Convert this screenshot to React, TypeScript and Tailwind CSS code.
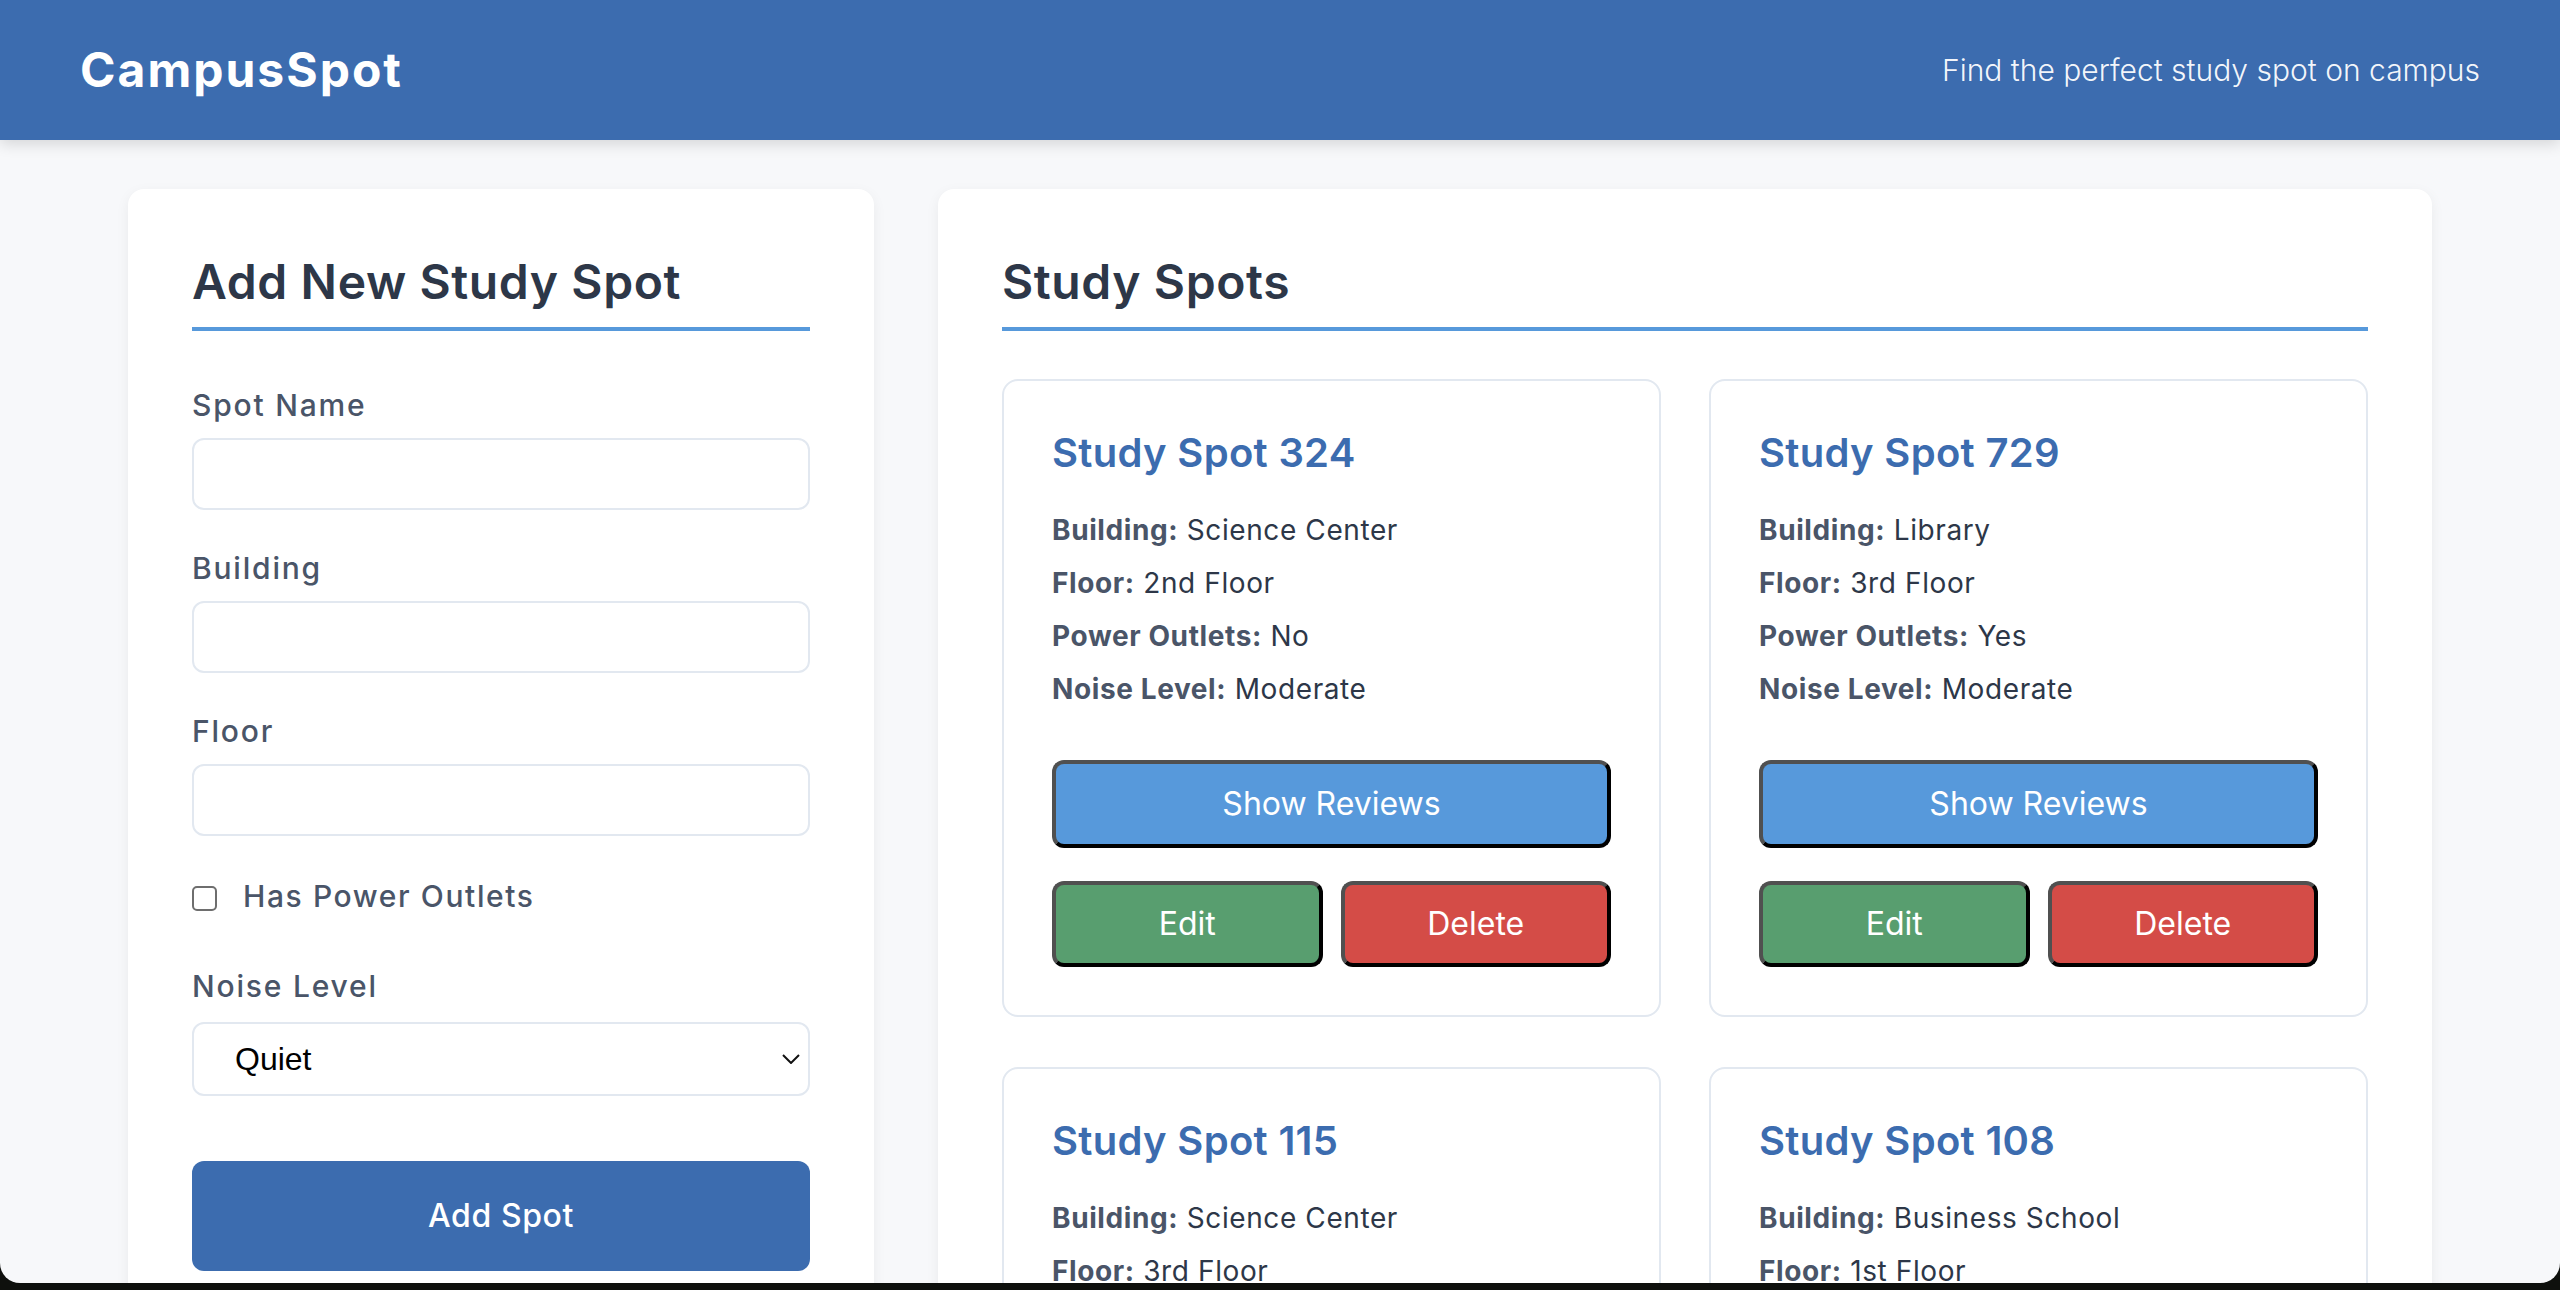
import React from 'react'

type Spot = {
    id: number
    building: string
    floor: string
    outlets: string
    noise: string
}

const spots: Spot[] = [
    { id: 324, building: 'Science Center', floor: '2nd Floor', outlets: 'No', noise: 'Moderate' },
    { id: 729, building: 'Library', floor: '3rd Floor', outlets: 'Yes', noise: 'Moderate' },
    { id: 115, building: 'Science Center', floor: '3rd Floor', outlets: 'Yes', noise: 'Quiet' },
    { id: 108, building: 'Business School', floor: '1st Floor', outlets: 'No', noise: 'Loud' },
]

const font = "font-['Inter','Open_Sans',sans-serif]"

const Field = ({ label, className }: { label: string; className?: string }) => (
    <div className={className}>
        <label className="block text-[30px] leading-[45px] font-medium tracking-[1.8px] text-[#4a5568]">
            {label}
        </label>
        <input
            type="text"
            className="mt-[10px] block w-full h-[72px] border-2 border-[#e2e8f0] rounded-[12px] bg-white px-[24px] outline-none"
        />
    </div>
)

const Detail = ({ label, value }: { label: string; value: string }) => (
    <p className="text-[28px] leading-[53px] tracking-[0.6px] text-[#2d3748]">
        <span className="font-bold text-[#4a5568]">{label}:</span> {value}
    </p>
)

const btnEdge = 'border-4 border-t-[#505050] border-l-[#505050] border-b-black border-r-black'

const SpotCard = ({ spot }: { spot: Spot }) => (
    <div className="border-2 border-[#e2e8f0] rounded-[16px] p-[48px] bg-white">
        <h3 className="text-[40px] leading-[48px] font-semibold tracking-[0.3px] text-[#3c6caf]">
            Study Spot {spot.id}
        </h3>
        <div className="mt-[27px]">
            <Detail label="Building" value={spot.building} />
            <Detail label="Floor" value={spot.floor} />
            <Detail label="Power Outlets" value={spot.outlets} />
            <Detail label="Noise Level" value={spot.noise} />
        </div>
        <button className={`mt-[44px] w-full h-[88px] rounded-[12px] ${btnEdge} bg-[#5799db] text-white text-[32px]`}>
            Show Reviews
        </button>
        <div className="mt-[33px] grid grid-cols-2 gap-[18px]">
            <button className={`h-[86px] rounded-[12px] ${btnEdge} bg-[#589e6f] text-white text-[32px]`}>
                Edit
            </button>
            <button className={`h-[86px] rounded-[12px] ${btnEdge} bg-[#d44c47] text-white text-[32px]`}>
                Delete
            </button>
        </div>
    </div>
)

export default function App() {
    return (
        <div className={`h-[1290px] w-[2560px] bg-[#0e100d] overflow-hidden ${font}`}>
            <div className="h-[1283px] overflow-hidden rounded-b-[20px] bg-[#f7f8fa] flex flex-col">
                {/* Header */}
                <header className="relative z-10 h-[140px] shrink-0 bg-[#3c6caf] px-[80px] flex items-center justify-between shadow-[0_4px_14px_rgba(0,0,0,0.14)]">
                    <h1 className="text-[48px] font-bold tracking-[2px] text-white">CampusSpot</h1>
                    <p className="text-[30px] font-light text-white/95">
                        Find the perfect study spot on campus
                    </p>
                </header>

                <main className="mx-auto w-[2304px] pt-[49px] grid grid-cols-[746px_1fr] gap-[64px] items-start">
                    {/* Add form */}
                    <section className="bg-white rounded-[16px] p-[64px] shadow-[0_4px_14px_rgba(0,0,0,0.06)]">
                        <h2 className="text-[48px] leading-[57.6px] font-semibold tracking-[0.6px] text-[#2d3748] pb-[16px] border-b-4 border-[#5799db]">
                            Add New Study Spot
                        </h2>
                        <form className="mt-[52px]">
                            <Field label="Spot Name" />
                            <Field label="Building" className="mt-[36px]" />
                            <Field label="Floor" className="mt-[36px]" />

                            <div className="mt-[38px] flex items-center gap-[26px]">
                                <input
                                    type="checkbox"
                                    className="appearance-none w-[25px] h-[25px] border-2 border-[#6e6e6e] rounded-[5px] bg-white mt-[4px]"
                                />
                                <span className="text-[30px] leading-[45px] font-medium tracking-[1.6px] text-[#4a5568]">
                                    Has Power Outlets
                                </span>
                            </div>

                            <div className="mt-[45px]">
                                <label className="block text-[30px] leading-[45px] font-medium tracking-[1.8px] text-[#4a5568]">
                                    Noise Level
                                </label>
                                <div className="mt-[13px] h-[74px] border-2 border-[#e2e8f0] rounded-[12px] bg-white flex items-center justify-between pl-[41px] pr-[8px]">
                                    <span className="font-['Liberation_Sans',Arial,sans-serif] text-[32px] text-black">
                                        Quiet
                                    </span>
                                    <svg width="18" height="10" viewBox="0 0 18 10" fill="none">
                                        <path d="M1 1l8 8 8-8" stroke="#111" strokeWidth="2" />
                                    </svg>
                                </div>
                            </div>

                            <button
                                type="button"
                                className="mt-[65px] w-full h-[110px] rounded-[12px] bg-[#3c6caf] text-white text-[32px] font-medium tracking-[0.6px]"
                            >
                                Add Spot
                            </button>
                        </form>
                    </section>

                    {/* Spots list */}
                    <section className="bg-white rounded-[16px] p-[64px] shadow-[0_4px_14px_rgba(0,0,0,0.06)]">
                        <h2 className="text-[48px] leading-[57.6px] font-semibold tracking-[0.6px] text-[#2d3748] pb-[16px] border-b-4 border-[#5799db]">
                            Study Spots
                        </h2>
                        <div className="mt-[48px] grid grid-cols-2 gap-x-[48px] gap-y-[50px]">
                            {spots.map((s) => (
                                <SpotCard key={s.id} spot={s} />
                            ))}
                        </div>
                    </section>
                </main>
            </div>
        </div>
    )
}
